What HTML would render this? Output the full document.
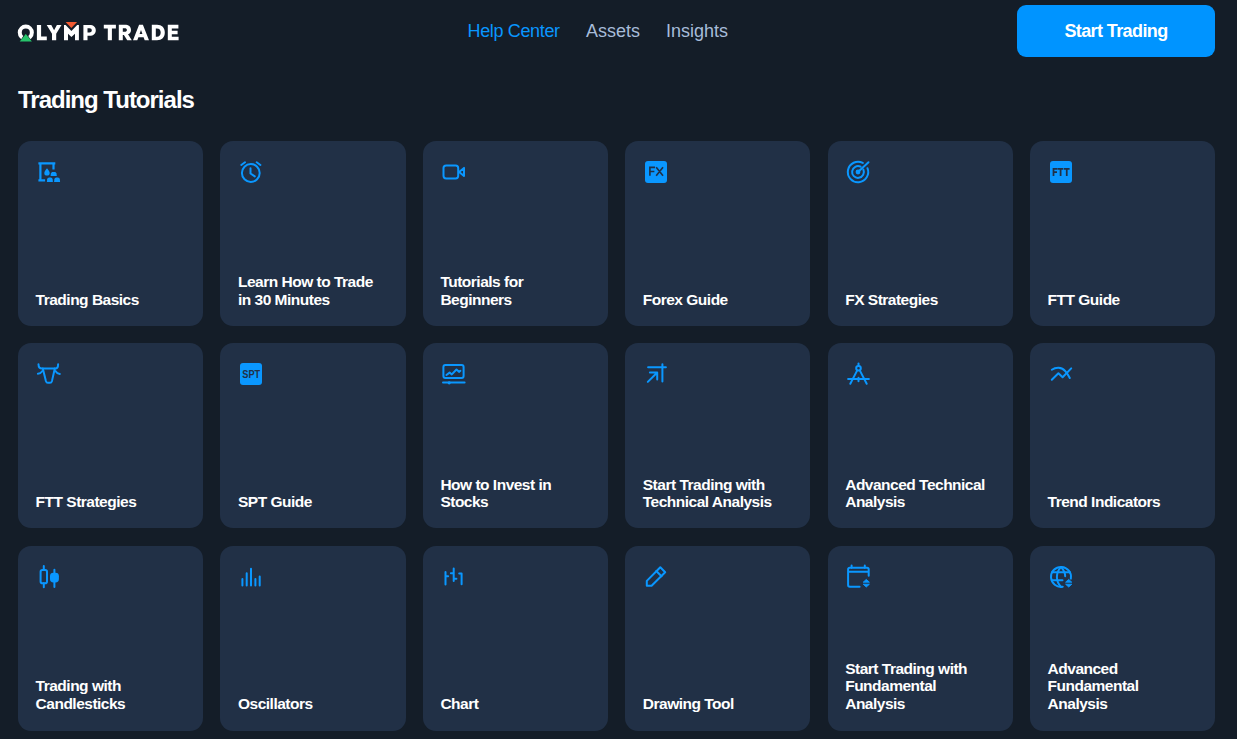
<!DOCTYPE html>
<html><head><meta charset="utf-8"><style>
html,body{margin:0;padding:0;background:#141d28;width:1237px;height:739px;overflow:hidden;font-family:"Liberation Sans",sans-serif;}
.nav{position:absolute;top:18px;font-size:18px;line-height:26px;white-space:nowrap;}
.btn{position:absolute;left:1017px;top:4.8px;width:198px;height:52.1px;border-radius:9px;background:#0094ff;}
.btn span{position:absolute;left:0;right:0;top:13px;text-align:center;color:#fff;font-weight:700;font-size:18px;line-height:26px;letter-spacing:-0.6px;}
h1{position:absolute;left:18px;top:84.5px;margin:0;font-size:24px;line-height:30px;font-weight:700;color:#fff;letter-spacing:-1px;white-space:nowrap;}
.card{position:absolute;width:185.2px;height:185.2px;border-radius:13px;background:#213046;}
.card svg{position:absolute;left:18.8px;top:19.2px;width:24px;height:24px;overflow:visible}
.card .t{position:absolute;left:17.6px;bottom:17.6px;right:8px;color:#fff;font-weight:700;font-size:15.5px;line-height:17.6px;letter-spacing:-0.5px;}
</style></head><body>
<svg style="position:absolute;left:0;top:0" width="200" height="60" viewBox="0 0 200 60">
<circle cx="25.8" cy="32.6" r="6.05" fill="none" stroke="#fff" stroke-width="4"/>
<path d="M25.8 33.2L31.2 41.6H20.4Z" fill="#2bc36f" stroke="#141d28" stroke-width="1.2" stroke-linejoin="miter"/>
<path d="M25.8 34.1L31.9 41.4H19.7Z" fill="#27c46b"/>
<path d="M36.9 24.9H41.1V36.4H46.8V40.3H36.9Z" fill="#fff"/>
<path d="M46.7 24.9H51.3L54.1 30.3L56.9 24.9H61.5L56.2 33.8V40.3H52V33.8Z" fill="#fff"/>
<path d="M64 40.3V24.9H65.6L71.4 31.1L77.2 24.9H78.9V40.3H75V33.8L71.4 37L68 33.8V40.3Z" fill="#fff"/>
<path d="M65.6 22.1H77.1L71.35 27.9Z" fill="#f15a31"/>
<path d="M83.4 40.3V24.9H89.6C93.5 24.9 95.8 26.8 95.8 30.3C95.8 33.8 93.5 35.8 89.6 35.8H87.5V40.3Z M87.5 28.3V32.4H89.4C91 32.4 91.8 31.7 91.8 30.35C91.8 29 91 28.3 89.4 28.3Z" fill="#fff" fill-rule="evenodd"/>
<path d="M103.8 24.8H115.9V28.6H111.9V40.3H107.8V28.6H103.8Z" fill="#fff"/>
<path d="M118.8 40.3V24.8H124.8C128.6 24.8 131 26.6 131 29.9C131 32.1 129.9 33.6 128 34.3L131.8 40.3H127.2L123.9 34.9H122.8V40.3Z M122.8 28.2V31.7H124.5C126.1 31.7 126.9 31.1 126.9 29.95C126.9 28.8 126.1 28.2 124.5 28.2Z" fill="#fff" fill-rule="evenodd"/>
<path d="M133 40.3L139.1 24.8H142.9L149 40.3H144.7L143.6 37.3H138.4L137.3 40.3Z M139.6 34H142.4L141 30Z" fill="#fff" fill-rule="evenodd"/>
<path d="M151.8 40.3V24.8H157C161.9 24.8 164.8 27.8 164.8 32.55C164.8 37.3 161.9 40.3 157 40.3Z M155.8 28.4V36.7H156.9C159.4 36.7 160.7 35.2 160.7 32.55C160.7 29.9 159.4 28.4 156.9 28.4Z" fill="#fff" fill-rule="evenodd"/>
<path d="M167.8 40.3V24.8H178.4V28.4H171.8V30.8H177.6V34.2H171.8V36.7H178.6V40.3Z" fill="#fff"/>
</svg>
<div class="nav" style="left:467.5px;color:#0996ff;letter-spacing:-0.35px">Help Center</div>
<div class="nav" style="left:586px;color:#a7bcd9;letter-spacing:0px">Assets</div>
<div class="nav" style="left:666px;color:#a7bcd9;letter-spacing:0px">Insights</div>
<div class="btn"><span>Start Trading</span></div>
<h1>Trading Tutorials</h1>
<div class="card" style="left:18.00px;top:140.80px"><svg viewBox="0 0 24 24"><path d="M1.4 3.4H18.3M3.4 2.3V21.4M1.4 20.3H8.1M16.5 3.4V9.5" fill="none" stroke="#0a97ff" stroke-width="2.2"/>
<path d="M10 8.3C10 8.3 7.3 11.3 7.3 12.9A2.7 2.7 0 0 0 12.7 12.9C12.7 11.3 10 8.3 10 8.3Z" fill="#0a97ff"/>
<path d="M13.6 15.9L13.9 13.6C14.1 12.5 14.8 11.9 15.9 11.9H17.5C18.6 11.9 19.3 12.5 19.5 13.6L19.8 15.9Z" fill="#0a97ff"/>
<path d="M9.9 21.9L10.2 19.3C10.4 18.2 11.1 17.5 12.2 17.5H13.6C14.7 17.5 15.4 18.2 15.6 19.3L15.9 21.9Z" fill="#0a97ff"/>
<path d="M17.1 21.9L17.4 19.3C17.6 18.2 18.3 17.5 19.4 17.5H20.8C21.9 17.5 22.6 18.2 22.8 19.3L23.1 21.9Z" fill="#0a97ff"/></svg><div class="t">Trading Basics</div></div>
<div class="card" style="left:220.40px;top:140.80px"><svg viewBox="0 0 24 24"><circle cx="11.8" cy="13" r="8.9" fill="none" stroke="#0a97ff" stroke-width="2" stroke-linecap="round" stroke-linejoin="round"/><path d="M11.5 8.3V13.5L15.8 16.4" fill="none" stroke="#0a97ff" stroke-width="2" stroke-linecap="round" stroke-linejoin="round" stroke-width="1.6"/><path d="M2.3 5L6 2.3M17.7 2.3L21.4 5" fill="none" stroke="#0a97ff" stroke-width="2" stroke-linecap="round" stroke-linejoin="round"/></svg><div class="t">Learn How to Trade<br>in 30 Minutes</div></div>
<div class="card" style="left:422.80px;top:140.80px"><svg viewBox="0 0 24 24"><rect x="1.5" y="5.4" width="14.7" height="13" rx="2.6" fill="none" stroke="#0a97ff" stroke-width="2" stroke-linecap="round" stroke-linejoin="round" stroke-width="2.3"/><path d="M17.1 11.9L22 7.9V15.9Z" fill="none" stroke="#0a97ff" stroke-width="2" stroke-linecap="round" stroke-linejoin="round" stroke-width="2"/></svg><div class="t">Tutorials for<br>Beginners</div></div>
<div class="card" style="left:625.20px;top:140.80px"><svg viewBox="0 0 24 24"><rect x="1" y="1" width="22" height="22" rx="3" fill="#0a97ff"/><path d="M5.9 15.8V7.3H11M5.9 11.5H10.4M12.2 7.3L19 15.8M19 7.3L12.2 15.8" fill="none" stroke="#213046" stroke-width="1.65"/></svg><div class="t">Forex Guide</div></div>
<div class="card" style="left:827.60px;top:140.80px"><svg viewBox="0 0 24 24"><path d="M21.46 8.18A10.2 10.2 0 1 1 16.79 2.99" fill="none" stroke="#0a97ff" stroke-width="2" stroke-linecap="round" stroke-linejoin="round"/><path d="M17.35 9.51A5.9 5.9 0 1 1 14.59 6.7" fill="none" stroke="#0a97ff" stroke-width="2" stroke-linecap="round" stroke-linejoin="round"/><circle cx="12" cy="12" r="2.4" fill="#0a97ff"/><path d="M12 12L22.5 2.3" fill="none" stroke="#0a97ff" stroke-width="2" stroke-linecap="round" stroke-linejoin="round" stroke-width="2.2"/></svg><div class="t">FX Strategies</div></div>
<div class="card" style="left:1030.00px;top:140.80px"><svg viewBox="0 0 24 24"><rect x="1" y="1" width="22" height="22" rx="3" fill="#0a97ff"/><path d="M4.5 15.9V8.8H8.6M4.5 12.1H8M8.9 8.8H14.3M11.6 8.8V15.9M14.9 8.8H20.6M17.75 8.8V15.9" fill="none" stroke="#213046" stroke-width="1.75"/></svg><div class="t">FTT Guide</div></div>
<div class="card" style="left:18.00px;top:343.20px"><svg viewBox="0 0 24 24"><path d="M1.5 2.2C1.5 5 2.6 6.5 5 6.5H18.4C20.8 6.5 21.1 5 21.1 2.2" fill="none" stroke="#0a97ff" stroke-width="2" stroke-linecap="round" stroke-linejoin="round"/><path d="M5.4 9C4.2 10.8 2.6 11.7 0.9 11.8M18.4 9C19.5 10.8 21.1 11.8 22.8 12" fill="none" stroke="#0a97ff" stroke-width="2" stroke-linecap="round" stroke-linejoin="round"/><path d="M5.8 6.5L8.9 18.9C9.3 20.3 9.9 20.8 10.9 20.8H13C14 20.8 14.6 20.3 15 18.9L17.8 6.5" fill="none" stroke="#0a97ff" stroke-width="2" stroke-linecap="round" stroke-linejoin="round"/></svg><div class="t">FTT Strategies</div></div>
<div class="card" style="left:220.40px;top:343.20px"><svg viewBox="0 0 24 24"><rect x="1" y="1" width="22" height="22" rx="3" fill="#0a97ff"/><text x="3.3" y="15.8" textLength="17.9" lengthAdjust="spacingAndGlyphs" font-family="Liberation Sans" font-size="11" font-weight="700" fill="#213046">SPT</text></svg><div class="t">SPT Guide</div></div>
<div class="card" style="left:422.80px;top:343.20px"><svg viewBox="0 0 24 24"><rect x="1.4" y="3.1" width="20.2" height="12.9" rx="2" fill="none" stroke="#0a97ff" stroke-width="2" stroke-linecap="round" stroke-linejoin="round" stroke-width="2.3"/><path d="M4.4 13L7.6 10.6L9.8 12.4L14.5 7.5L17 9.9L18.4 8.8" fill="none" stroke="#0a97ff" stroke-width="2" stroke-linecap="round" stroke-linejoin="round"/><path d="M1 20.6H22.6" fill="none" stroke="#0a97ff" stroke-width="2" stroke-linecap="round" stroke-linejoin="round"/><circle cx="7.2" cy="20.8" r="1.6" fill="#0a97ff"/></svg><div class="t">How to Invest in<br>Stocks</div></div>
<div class="card" style="left:625.20px;top:343.20px"><svg viewBox="0 0 24 24"><path d="M4.1 5.3H21.9M18.4 2.3V19.4M3.8 19.9L13 10.7M5.9 10.5H13.2V17.6" fill="none" stroke="#0a97ff" stroke-width="2" stroke-linecap="round" stroke-linejoin="round"/></svg><div class="t">Start Trading with<br>Technical Analysis</div></div>
<div class="card" style="left:827.60px;top:343.20px"><svg viewBox="0 0 24 24"><g transform="translate(0.5 0)"><path d="M12 1.4V4" fill="none" stroke="#0a97ff" stroke-width="2" stroke-linecap="round" stroke-linejoin="round"/><circle cx="12" cy="6.3" r="2.3" fill="none" stroke="#0a97ff" stroke-width="2" stroke-linecap="round" stroke-linejoin="round" stroke-width="1.9"/><path d="M10.6 8.6L3.8 21.8M13.4 8.6L20.2 21.8M1.6 17H22.4M12 15.8V19.3" fill="none" stroke="#0a97ff" stroke-width="2" stroke-linecap="round" stroke-linejoin="round"/></g></svg><div class="t">Advanced Technical<br>Analysis</div></div>
<div class="card" style="left:1030.00px;top:343.20px"><svg viewBox="0 0 24 24"><path d="M2.8 7.8C6.5 5.2 12.5 4.4 16.5 9.4C18.5 12 19.8 14 20.8 16" fill="none" stroke="#0a97ff" stroke-width="2" stroke-linecap="round" stroke-linejoin="round"/><path d="M2.8 17.7L9.4 11.2L13.6 15.2L22.2 6.4" fill="none" stroke="#0a97ff" stroke-width="2" stroke-linecap="round" stroke-linejoin="round"/></svg><div class="t">Trend Indicators</div></div>
<div class="card" style="left:18.00px;top:545.60px"><svg viewBox="0 0 24 24"><rect x="3.6" y="5" width="6.4" height="13.2" rx="1.8" fill="none" stroke="#0a97ff" stroke-width="2" stroke-linecap="round" stroke-linejoin="round" stroke-width="2.1"/><path d="M6.8 1.1V5M6.8 18.2V22.2M17.4 4.7V22" fill="none" stroke="#0a97ff" stroke-width="2" stroke-linecap="round" stroke-linejoin="round"/><rect x="13" y="7.8" width="8.9" height="9.6" rx="3.4" fill="#0a97ff"/></svg><div class="t" style="bottom:18.4px">Trading with<br>Candlesticks</div></div>
<div class="card" style="left:220.40px;top:545.60px"><svg viewBox="0 0 24 24"><path d="M3.4 14V20.5M7.7 8.3V20.5M12 3.7V20.5M16.4 14V20.5M20.7 11.5V20.5" fill="none" stroke="#0a97ff" stroke-width="2" stroke-linecap="round" stroke-linejoin="round" stroke-width="2.2"/></svg><div class="t" style="bottom:18.4px">Oscillators</div></div>
<div class="card" style="left:422.80px;top:545.60px"><svg viewBox="0 0 24 24"><path d="M3.5 7.1V19.5M3.5 11.2H6.1M11.7 3.4V15.9M11.7 8.2H8.9M11.7 13.8H14.4M19.6 8.5V19.3M19.6 8.5H17.2" fill="none" stroke="#0a97ff" stroke-width="2" stroke-linecap="round" stroke-linejoin="round" stroke-width="2.2"/></svg><div class="t" style="bottom:18.4px">Chart</div></div>
<div class="card" style="left:625.20px;top:545.60px"><svg viewBox="0 0 24 24"><path d="M16.3 2.3L21.2 7.2L7.6 20.7H2.8V15.9Z" fill="none" stroke="#0a97ff" stroke-width="2" stroke-linecap="round" stroke-linejoin="round" stroke-width="2.1"/><path d="M12.3 6L17.5 11.3" fill="none" stroke="#0a97ff" stroke-width="2" stroke-linecap="round" stroke-linejoin="round"/></svg><div class="t" style="bottom:18.4px">Drawing Tool</div></div>
<div class="card" style="left:827.60px;top:545.60px"><svg viewBox="0 0 24 24"><path d="M13.6 21.7H3.8C2.6 21.7 2.1 21.2 2.1 20V4.4C2.1 3.3 2.6 2.8 3.8 2.8H21C22.2 2.8 22.7 3.3 22.7 4.4V10.8M2.3 6.8H22.5M5.6 0.4V3M18.8 0.4V3" fill="none" stroke="#0a97ff" stroke-width="2" stroke-linecap="round" stroke-linejoin="round" stroke-width="2.2"/><path d="M17.2 17.2L20.3 14.4L23.4 17.2Z M17.2 19.2L20.3 22L23.4 19.2Z" fill="#0a97ff" stroke="#0a97ff" stroke-width="0.9" stroke-linejoin="round"/></svg><div class="t" style="bottom:18.4px">Start Trading with<br>Fundamental<br>Analysis</div></div>
<div class="card" style="left:1030.00px;top:545.60px"><svg viewBox="0 0 24 24"><path d="M13.74 21.75A10 10 0 1 1 21.85 13.64" fill="none" stroke="#0a97ff" stroke-width="2" stroke-linecap="round" stroke-linejoin="round"/><path d="M12 2.1C9.3 4.8 7.9 8.3 7.9 11.9C7.9 15.5 9.3 19 12 21.7M12 2.1C14.7 4.8 16.1 8.3 16.2 11.3" fill="none" stroke="#0a97ff" stroke-width="2" stroke-linecap="round" stroke-linejoin="round" stroke-width="1.9"/><path d="M3 7.3H21M2.9 15.3H13.5" fill="none" stroke="#0a97ff" stroke-width="2" stroke-linecap="round" stroke-linejoin="round" stroke-width="1.9"/><path d="M16.6 17.2L19.7 14.4L22.8 17.2Z M16.6 19.2L19.7 22L22.8 19.2Z" fill="#0a97ff" stroke="#0a97ff" stroke-width="0.9" stroke-linejoin="round"/></svg><div class="t" style="bottom:18.4px">Advanced<br>Fundamental<br>Analysis</div></div>
</body></html>
